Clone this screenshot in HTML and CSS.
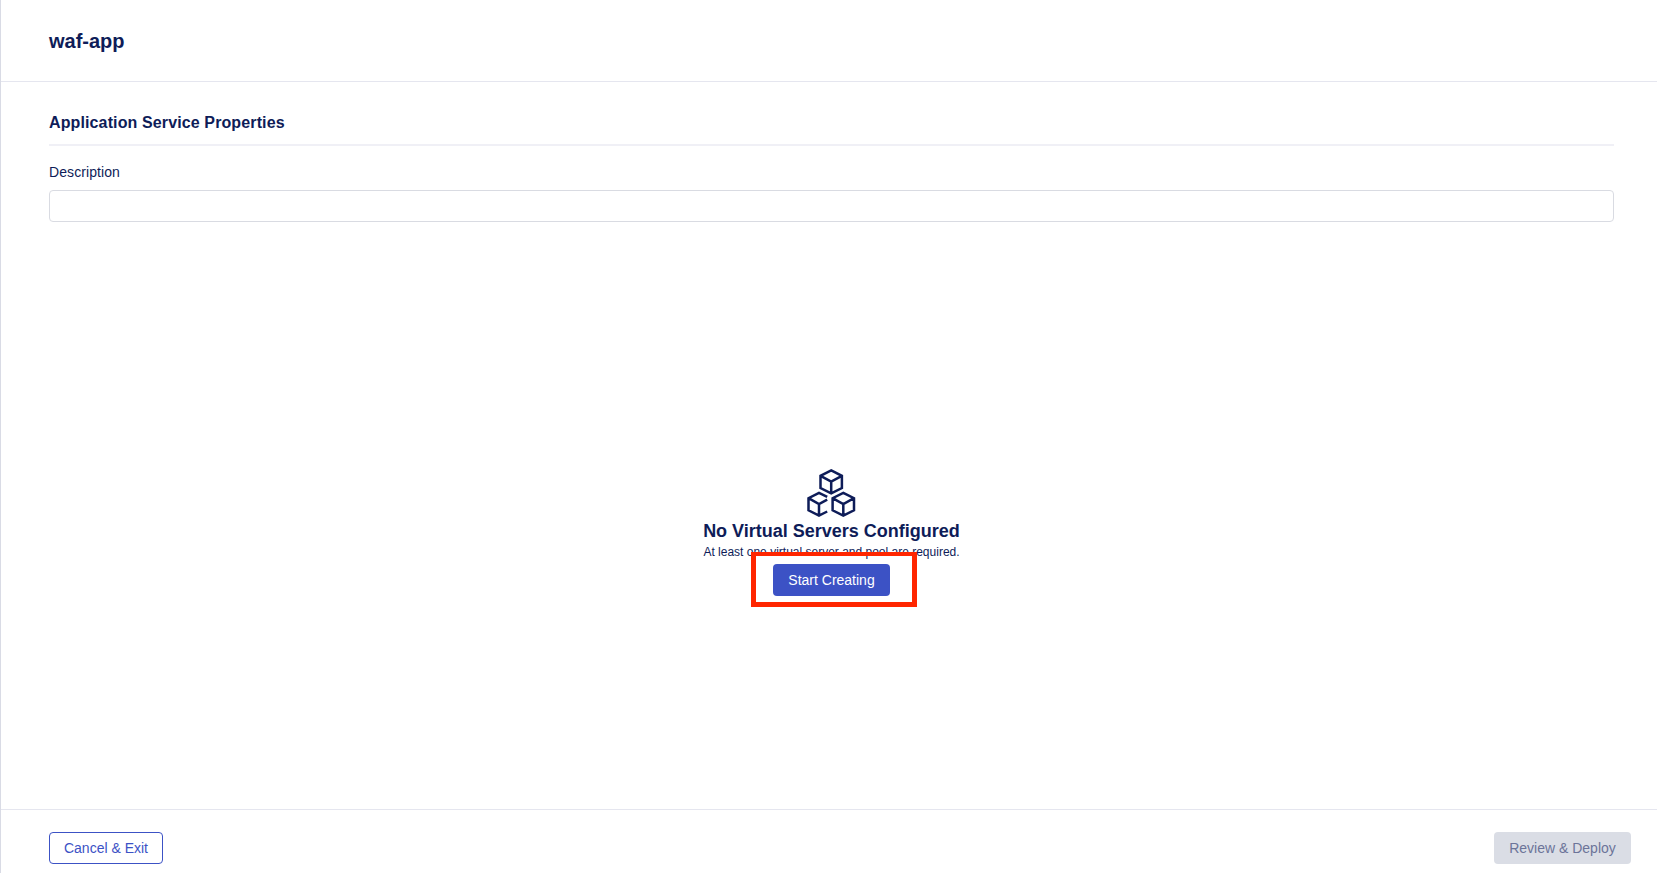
FILE: index.html
```html
<!DOCTYPE html>
<html lang="en">
<head>
<meta charset="utf-8">
<title>waf-app</title>
<link rel="stylesheet" href="styles.css">
</head>
<body>
<div class="page">
  <header class="header"><h1 class="title">waf-app</h1></header>
  <main class="main">
    <h2 class="section-title">Application Service Properties</h2>
    <label class="label" for="description">Description</label>
    <input class="input" id="description" type="text">
    <section class="empty">
      <svg class="cubes" width="50" height="50" viewBox="0 0 50 50" fill="none" stroke="#0e1c58" stroke-width="2.5" stroke-linejoin="miter">
        <path d="M25.2 2.4 35.9 7.8V20L25.2 25.3 14.5 20V7.8ZM14.5 7.8 25.2 13.6 35.9 7.8M25.2 13.6V25.3"/>
        <path d="M21.2 28.9 13 24.8 2.5 30.2V42.3L13 47.6 21.2 43.5M2.5 30.2 13 36 21.2 31.6M13 36V47.6"/>
        <path d="M37.3 24.8 48 30.2V42.3L37.3 47.6 26.6 42.3V30.2ZM26.6 30.2 37.3 36 48 30.2M37.3 36V47.6"/>
      </svg>
      <h3 class="empty-title">No Virtual Servers Configured</h3>
      <p class="empty-text">At least one virtual server and pool are required.</p>
      <div class="action">
        <button class="button primary">Start Creating</button>
        <span class="highlight"></span>
      </div>
    </section>
  </main>
  <footer class="footer">
    <button class="button outline">Cancel &amp; Exit</button>
    <button class="button disabled">Review &amp; Deploy</button>
  </footer>
</div>
</body>
</html>
```
FILE: styles.css
```css
* { box-sizing: border-box; }
body {
  margin: 0;
  background: #fff;
  color: #0e1c58;
  font-family: "Liberation Sans", Arial, sans-serif;
}
h1, h2, h3, p { margin: 0; }
.page {
  height: 873px;
  display: flex;
  flex-direction: column;
  border-left: 1px solid #d9dbe5;
  overflow: hidden;
}
.header {
  height: 82px;
  padding: 29px 48px 0;
  border-bottom: 1px solid #e5e6ef;
}
.title { font-size: 20px; line-height: 24px; }
.main {
  flex: 1;
  display: flex;
  flex-direction: column;
  padding: 31px 43px 0 48px;
}
.section-title {
  height: 33px;
  font-size: 16px;
  line-height: 20px;
  letter-spacing: 0.12px;
  border-bottom: 2px solid #f0f0f6;
}
.label { margin-top: 17px; font-size: 14px; line-height: 18px; letter-spacing: 0.08px; }
.input {
  height: 32px;
  margin-top: 9px;
  border: 1px solid #d9dbe2;
  border-radius: 4px;
  background: #fff;
}
.empty {
  display: flex;
  flex-direction: column;
  align-items: center;
  margin-top: 246px;
}
.cubes { display: block; margin-right: 2px; }
.empty-title {
  margin-top: 2px;
  font-size: 18px;
  line-height: 22px;
  white-space: nowrap;
}
.empty-text { margin-top: 2px; font-size: 12px; line-height: 16px; white-space: nowrap; }
.action { position: relative; margin-top: 4px; }
.button {
  display: block;
  height: 32px;
  padding: 0;
  border: 0;
  border-radius: 4px;
  font-family: inherit;
  font-size: 14px;
}
.primary { width: 117px; background: #3c52c5; color: #fff; }
.highlight {
  position: absolute;
  left: -22px;
  top: -12px;
  width: 166px;
  height: 55px;
  border: 5px solid #ff2600;
  border-top-width: 4px;
}
.footer {
  height: 64px;
  display: flex;
  justify-content: space-between;
  padding: 22px 26px 0 48px;
  border-top: 1px solid #e5e6ef;
}
.outline { width: 114px; border: 1px solid #3c52c5; background: #fff; color: #3c52c5; }
.disabled { width: 137px; background: #dadde5; color: #6c7499; }
```
